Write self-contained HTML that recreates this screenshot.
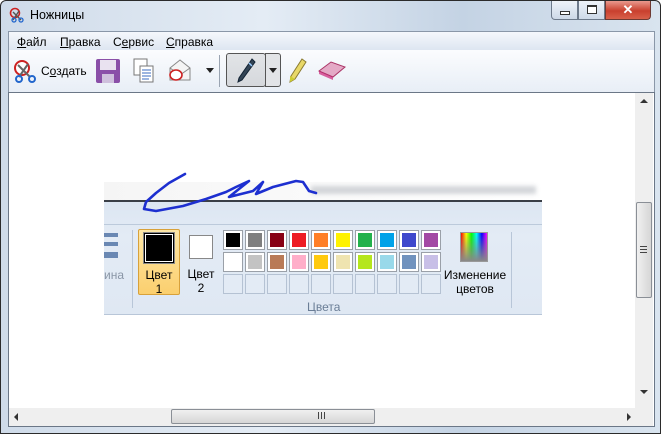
<!DOCTYPE html>
<html><head><meta charset="utf-8"><style>
*{margin:0;padding:0;box-sizing:border-box}
body{width:661px;height:434px;overflow:hidden;font-family:"Liberation Sans",sans-serif;font-size:12px;background:#fff}
.win{position:absolute;left:0;top:0;width:661px;height:434px;background:linear-gradient(90deg,#cfdbe9,#e4ecf5 40%,#c4d3e4 70%,#d9e4ef);border:1px solid #2b2b2b;border-radius:6px 6px 0 0}
.abs{position:absolute}
.title{left:29px;top:7px;font-size:12.5px;color:#000}
.menu{left:7px;top:30px;width:647px;height:19px;background:linear-gradient(#f5f8fc,#dde6f1);border:1px solid #8a97a8;border-bottom:none}
.menu span{position:absolute;top:3px;font-size:12px}
.tb{left:7px;top:49px;width:647px;height:42px;background:linear-gradient(#fbfcfe,#e8eef6);border-left:1px solid #8a97a8;border-right:1px solid #8a97a8}
.client{left:7px;top:91px;width:647px;height:335px;background:#fff;border:1px solid #6b7787}
.vs{left:634px;top:92px;width:18px;height:315px;background:#efefef}
.hs{left:8px;top:407px;width:626px;height:18px;background:#efefef}
.grip{left:634px;top:407px;width:18px;height:18px;background:#efefef}
.sw{position:absolute;width:20px;height:20px;border:1px solid #9aa0a8;background:#fff;padding:2px}
.sw i{display:block;width:100%;height:100%}
</style></head><body>
<div class="win">
<svg class="abs" style="left:8px;top:6px" width="16" height="16"><circle cx="6" cy="6" r="4.5" fill="none" stroke="#c22" stroke-width="1.6"/><path d="M4 5l8 8M10 4l-6 9" stroke="#555" stroke-width="1.4"/><circle cx="5" cy="13" r="2" fill="none" stroke="#26c" stroke-width="1.3"/><circle cx="12" cy="13" r="2" fill="none" stroke="#26c" stroke-width="1.3"/></svg>
<div class="abs title">Ножницы</div>
<div class="abs" style="left:550px;top:0;width:27px;height:19px;background:linear-gradient(#eef3f9,#cdd9e8);border:1px solid #6d7a8b;border-top:none;border-radius:0 0 0 4px"><div style="position:absolute;left:8px;top:10px;width:10px;height:4px;border:1px solid #333;background:#fff"></div></div>
<div class="abs" style="left:577px;top:0;width:27px;height:19px;background:linear-gradient(#eef3f9,#cdd9e8);border:1px solid #6d7a8b;border-top:none"><div style="position:absolute;left:8px;top:4px;width:10px;height:9px;border:1px solid #333;border-top-width:2px;background:#fff"></div></div>
<div class="abs" style="left:604px;top:0;width:46px;height:19px;background:linear-gradient(#e99a8e,#c9402e 55%,#d8604a);border:1px solid #6d3a33;border-top:none;border-radius:0 0 4px 0;color:#fff;font-weight:bold;font-size:13px;text-align:center;line-height:17px">✕</div>
<div class="abs menu"><span style="left:8px"><u>Ф</u>айл</span><span style="left:51px"><u>П</u>равка</span><span style="left:104px">С<u>е</u>рвис</span><span style="left:157px"><u>С</u>правка</span></div>
<div class="abs tb">
<svg class="abs" style="left:3px;top:8px" width="26" height="26"><circle cx="10" cy="10" r="7" fill="#fff" stroke="#c22" stroke-width="2"/><path d="M6 7l12 12M16 6l-9 13" stroke="#666" stroke-width="2"/><circle cx="7" cy="21" r="3" fill="none" stroke="#26c" stroke-width="2"/><circle cx="20" cy="21" r="3" fill="none" stroke="#26c" stroke-width="2"/></svg>
<div class="abs" style="left:32px;top:14px">С<u>о</u>здать</div>
<svg class="abs" style="left:86px;top:8px" width="26" height="26"><rect x="1" y="1" width="24" height="24" rx="2" fill="#8a4fa8"/><rect x="5" y="2" width="16" height="10" fill="#e9e2f0"/><rect x="7" y="16" width="12" height="9" fill="#cfc0dd"/></svg>
<svg class="abs" style="left:124px;top:8px" width="22" height="26"><rect x="1" y="1" width="13" height="16" fill="#fff" stroke="#777"/><rect x="7" y="8" width="13" height="16" fill="#fff" stroke="#777"/><path d="M9 12h9M9 15h9M9 18h9M9 21h7" stroke="#3a6bc0"/></svg>
<svg class="abs" style="left:158px;top:8px" width="28" height="26"><path d="M3 10l10-8 10 8v12H3z" fill="#f4f4f4" stroke="#888"/><path d="M3 10l10 7 10-7" fill="none" stroke="#888"/><ellipse cx="9" cy="17" rx="6" ry="5" fill="#fff" stroke="#c22" stroke-width="1.6"/></svg>
<div class="abs" style="left:197px;top:18px;border:4px solid transparent;border-top:5px solid #222;border-bottom:0"></div>
<div class="abs" style="left:210px;top:5px;width:1px;height:32px;background:#9aa4b2"></div>
<div class="abs" style="left:217px;top:3px;width:40px;height:34px;border:1px solid #555;border-radius:3px;background:linear-gradient(#e2e4e7,#d5d8dc)"></div>
<div class="abs" style="left:256px;top:3px;width:16px;height:34px;border:1px solid #555;border-radius:0 3px 3px 0;background:#e2e4e7"></div>
<div class="abs" style="left:260px;top:18px;border:4px solid transparent;border-top:5px solid #222;border-bottom:0"></div>
<svg class="abs" style="left:226px;top:7px" width="22" height="28"><path d="M17 2l3 3-13 18-4 2 1-4z" fill="#345" stroke="#123"/><path d="M14 6l3 3" stroke="#9cf" stroke-width="1.5"/></svg>
<svg class="abs" style="left:278px;top:7px" width="20" height="28"><path d="M15 2l4 3-11 17-5 3 1-6z" fill="#e8d868" stroke="#8a7a30"/><path d="M3 19l5 3-5 3z" fill="#cc3"/></svg>
<svg class="abs" style="left:308px;top:9px" width="30" height="22"><path d="M2 12l12-9 14 5-12 10z" fill="#e4a9c6" stroke="#a36"/><path d="M2 12l14 6v3L2 15z" fill="#c27" opacity=".7"/></svg>
</div>
<div class="abs client"></div>
<div class="abs" style="left:103px;top:181px;width:438px;height:18px;background:linear-gradient(90deg,#f5f5f5,#fff);"></div>
<div class="abs" style="left:310px;top:185px;width:225px;height:8px;background:#c9ccd1;filter:blur(2px);opacity:.8"></div>
<div class="abs" style="left:103px;top:199px;width:438px;height:2px;background:#3a3f47"></div>
<div class="abs" style="left:103px;top:201px;width:438px;height:112px;background:linear-gradient(#dce6f2,#e3ebf5 30%,#dfe8f3)"></div>
<div class="abs" style="left:103px;top:223px;width:438px;height:1px;background:#bccadb"></div>
<div class="abs" style="left:103px;top:313px;width:438px;height:1px;background:#b8c6d8"></div>
<div class="abs" style="left:103px;top:232px;width:14px;height:4px;background:#6a88b3"></div>
<div class="abs" style="left:103px;top:241px;width:14px;height:4px;background:#6a88b3"></div>
<div class="abs" style="left:103px;top:251px;width:14px;height:6px;background:#6a88b3"></div>
<div class="abs" style="left:103px;top:267px;color:#8a96a6">ина</div>
<div class="abs" style="left:131px;top:229px;width:1px;height:78px;background:#b8c6d8"></div>
<div class="abs" style="left:137px;top:228px;width:42px;height:66px;background:linear-gradient(#fde7a8,#fbcf6e);border:1px solid #d8a13a;border-radius:2px;text-align:center;padding-top:38px;line-height:14px">Цвет<br>1</div>
<div class="abs" style="left:142px;top:231px;width:32px;height:32px;border:1px solid #888;background:#000;outline:1px solid #fff;outline-offset:-3px"></div>
<div class="abs" style="left:188px;top:234px;width:24px;height:24px;border:1px solid #888;background:#fff"></div>
<div class="abs" style="left:186px;top:266px;text-align:center;line-height:14px;width:28px">Цвет<br>2</div>
<div id="pal"></div>
<div class="abs" style="left:459px;top:231px;width:28px;height:30px;border:1px solid #999;background:linear-gradient(90deg,#f00,#ff0,#0f0,#0ff,#00f,#f0f);"><div style="width:100%;height:100%;background:linear-gradient(transparent,#888)"></div></div>
<div class="abs" style="left:442px;top:267px;width:64px;text-align:center;line-height:14px">Изменение<br>цветов</div>
<div class="abs" style="left:306px;top:299px;color:#6a7d96">Цвета</div>
<div class="abs" style="left:510px;top:231px;width:1px;height:76px;background:#b8c6d8"></div>
<svg class="abs" style="left:0;top:0" width="661" height="434"><path d="M184 173L168 182L155 192L145 201L143 208L155 210L182 205L205 198L225 191L235 186L248 180L228 196L252 190L262 181L255 193L272 186L295 180L302 181L308 190L315 192" fill="none" stroke="#1d2fd0" stroke-width="2.6" stroke-linecap="round" stroke-linejoin="round"/></svg>
<div class="abs vs"></div>
<div class="abs" style="left:639px;top:98px;border:4px solid transparent;border-bottom:4px solid #333;border-top:0"></div>
<div class="abs" style="left:639px;top:389px;border:4px solid transparent;border-top:4px solid #333;border-bottom:0"></div>
<div class="abs" style="left:635px;top:201px;width:16px;height:96px;border:1px solid #8a8f96;border-radius:2px;background:linear-gradient(90deg,#f0f0f0,#d6d6d6)"></div>
<div class="abs" style="left:639px;top:245px;width:7px;height:7px;border-top:1px solid #444;border-bottom:1px solid #444"><div style="margin-top:2px;height:1px;background:#444"></div></div>
<div class="abs hs"></div>
<div class="abs" style="left:13px;top:412px;border:4px solid transparent;border-right:4px solid #333;border-left:0"></div>
<div class="abs" style="left:626px;top:412px;border:4px solid transparent;border-left:4px solid #333;border-right:0"></div>
<div class="abs" style="left:170px;top:408px;width:204px;height:15px;border:1px solid #8a8f96;border-radius:2px;background:linear-gradient(#f0f0f0,#d6d6d6)"></div>
<div class="abs" style="left:317px;top:411px;width:7px;height:7px;border-left:1px solid #444;border-right:1px solid #444"><div style="margin-left:2px;width:1px;height:7px;background:#444"></div></div>
<div class="abs grip"></div>
</div>
<script>
var c=[["#000","#7f7f7f","#880015","#ed1c24","#ff7f27","#fff200","#22b14c","#00a2e8","#3f48cc","#a349a4"],["#fff","#c3c3c3","#b97a57","#ffaec9","#ffc90e","#efe4b0","#b5e61d","#99d9ea","#7092be","#c8bfe7"]];
var h="";for(var r=0;r<3;r++)for(var i=0;i<10;i++){var col=r<2?c[r][i]:"";h+='<div class="sw" style="left:'+(222+i*22)+'px;top:'+(229+r*22)+'px;'+(r==2?'background:#e3ebf5;border-color:#b5c2d3':'')+'">'+(r<2?'<i style="background:'+col+'"></i>':'')+'</div>';}
document.getElementById("pal").outerHTML=h;
</script>
</body></html>
